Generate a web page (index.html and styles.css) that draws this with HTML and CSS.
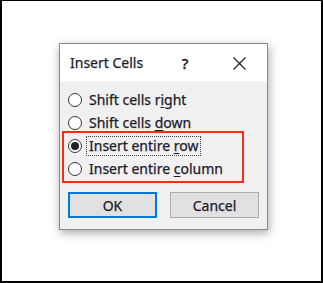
FILE: index.html
```html
<!DOCTYPE html>
<html lang="en">
<head>
  <meta charset="UTF-8">
  <title>Insert Cells</title>
  <link rel="stylesheet" href="styles.css">
</head>
<body>
<div class="frame">
  <div class="dialog">
    <div class="title-bar">
      <span class="title">Insert Cells</span>
      <span class="help">?</span>
      <span class="close">
        <svg width="13" height="13" viewBox="0 0 13 13">
          <path d="M0.5 0.5 L12.5 12.5 M12.5 0.5 L0.5 12.5" stroke="#1a1a1a" stroke-width="1.1" fill="none"/>
        </svg>
      </span>
    </div>

    <div class="dialog-body">
      <label class="option"><span class="radio"></span><span class="label">Shift cells r<u>i</u>ght</span></label>
      <label class="option"><span class="radio"></span><span class="label">Shift cells <u>d</u>own</span></label>

      <div class="highlight">
        <label class="option"><span class="radio checked"></span><span class="label focused">Insert entire <u>r</u>ow</span></label>
        <label class="option"><span class="radio"></span><span class="label">Insert entire <u>c</u>olumn</span></label>
      </div>

      <div class="buttons">
        <button class="btn default">OK</button>
        <button class="btn">Cancel</button>
      </div>
    </div>
  </div>
</div>
</body>
</html>
```

FILE: styles.css
```css
* {
  margin: 0;
  padding: 0;
  box-sizing: border-box;
}

body {
  background: #fff;
  font-family: 'Noto Sans', 'Open Sans', sans-serif;
  color: #1c1a2a;
  -webkit-text-stroke: 0.25px #1c1a2a;
}

.frame {
  width: 323px;
  height: 283px;
  border: 2px solid #000;
  border-top-width: 1px;
  padding: 42px 0 0 57px;
}

.dialog {
  width: 209px;
  height: 187px;
  border: 1px solid #8a8a8a;
  background: #f0f0f0;
  box-shadow: 1px 3px 9px rgba(0, 0, 0, 0.35);
}

.title-bar {
  height: 37px;
  background: #fff;
  display: flex;
  align-items: center;
  padding: 0 0 0 10px;
  font-size: 14px;
}

.title {
  flex: 1;
}

.help {
  width: 30px;
  text-align: center;
  font-size: 15px;
  -webkit-text-stroke: 0.5px #1c1a2a;
}

.close {
  width: 40px;
  margin-left: 19px;
  margin-right: 8px;
  display: flex;
  justify-content: center;
  padding-top: 1px;
}

.dialog-body {
  padding: 7px 8px 0 8px;
}

.option {
  height: 23px;
  display: flex;
  align-items: center;
  font-size: 14px;
}

.radio {
  width: 14px;
  height: 14px;
  border: 1px solid #333;
  border-radius: 50%;
  background: #fff;
  margin-right: 7px;
  display: flex;
  align-items: center;
  justify-content: center;
  flex-shrink: 0;
}

.radio.checked::after {
  content: '';
  width: 8px;
  height: 8px;
  border-radius: 50%;
  background: #222;
}

.label {
  line-height: 18px;
  padding: 0 2px;
  border: 1px dotted transparent;
  margin-left: -3px;
}

.label.focused {
  border-color: #444;
}

.label u {
  text-underline-offset: 2px;
}

.highlight {
  border: 2px solid #ff2a10;
  margin: -3px 15px 0 -6px;
  padding: 1px 0 1px 4px;
}

.buttons {
  display: flex;
  gap: 13px;
  margin-top: 9px;
}

.btn {
  width: 89px;
  height: 26px;
  background: #e1e1e1;
  border: 1px solid #adadad;
  font-family: inherit;
  font-size: 14px;
  color: inherit;
}

.btn.default {
  border: 2px solid #0078d7;
}
```
